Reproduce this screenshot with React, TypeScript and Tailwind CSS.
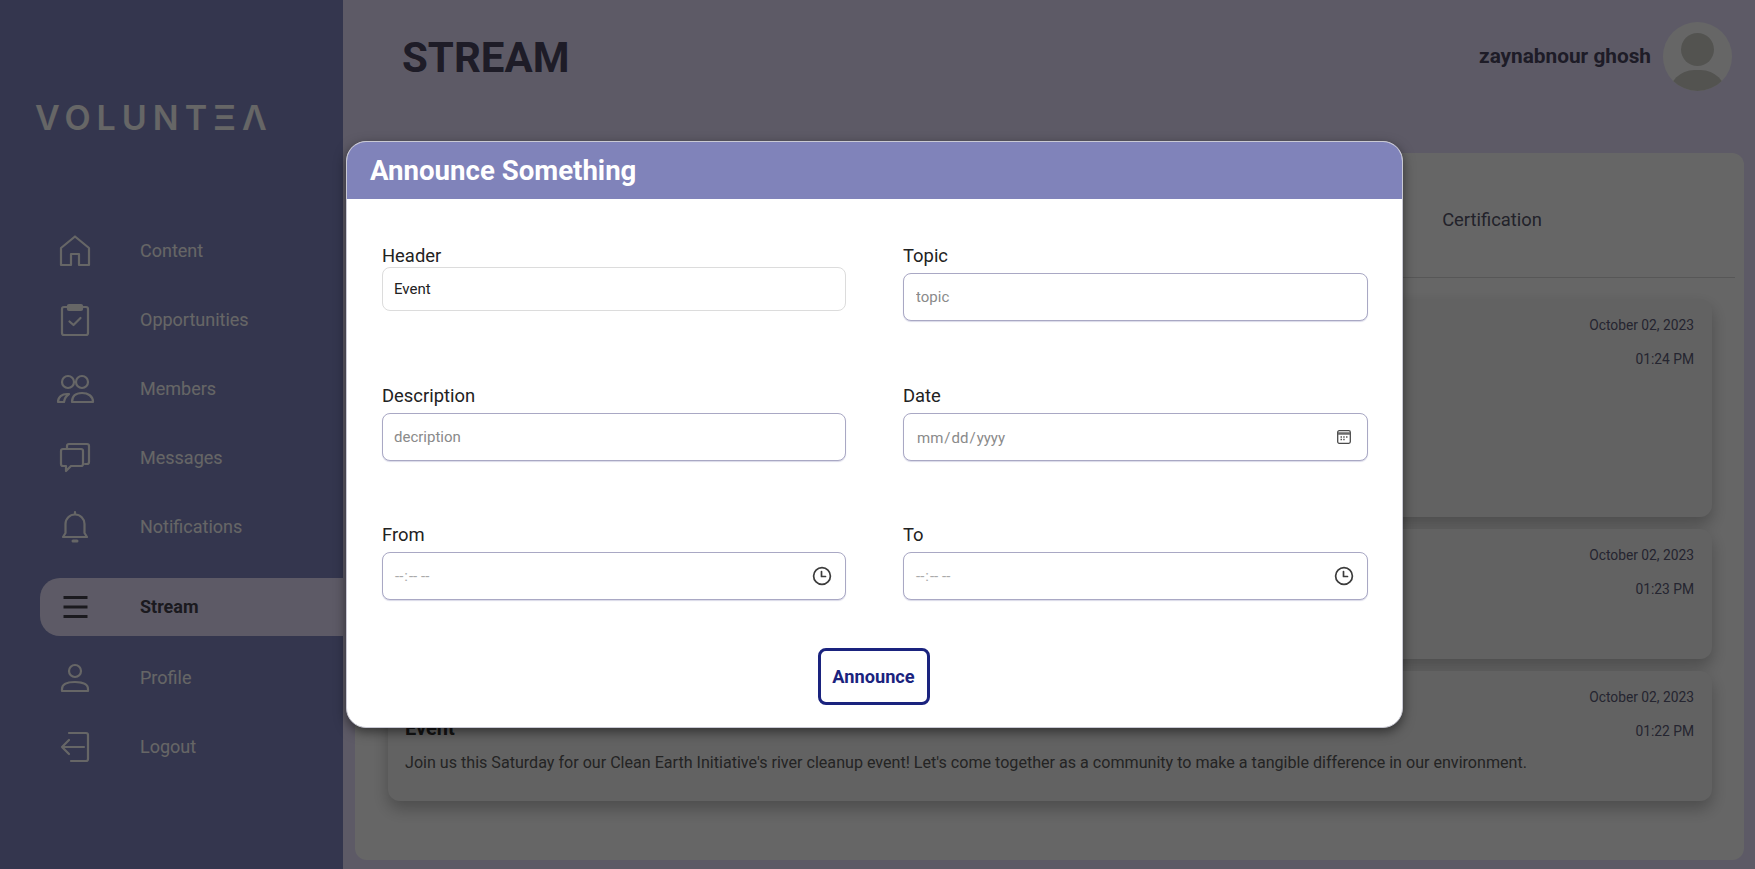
const nav = [
  { name: "Content", icon: "home" },
  { name: "Opportunities", icon: "clipboard" },
  { name: "Members", icon: "members" },
  { name: "Messages", icon: "messages" },
  { name: "Notifications", icon: "bell" },
  { name: "Stream", icon: "menu" },
  { name: "Profile", icon: "user" },
  { name: "Logout", icon: "logout" },
];

function NavIcon({ icon }: { icon: string }) {
  return (
    <svg viewBox="0 0 40 36" className="h-9 w-10" fill="none" stroke="currentColor" strokeWidth="2.200" strokeLinejoin="round" strokeLinecap="round">
      {icon === "home" && <path d="M6 32V15L20 3.500 34 15V32H24V21H16V32Z" />}
      {icon === "clipboard" && (
        <>
          <rect x="7" y="5" width="26" height="28" rx="2" />
          <rect x="13" y="3" width="14" height="5" rx="1" fill="currentColor" />
          <path d="M14.500 19.500l4 3.500 7-7" />
        </>
      )}
      {icon === "members" && (
        <>
          <circle cx="13" cy="11" r="6" />
          <circle cx="27" cy="11" r="6" />
          <path d="M17 31c0-6 4-9 10-9s11 3 11 9z" />
          <path d="M3 31c0-5 4-8 9-8h2c-3 2-4.500 5-5 8z" />
        </>
      )}
      {icon === "messages" && (
        <>
          <path d="M12 8V6a2 2 0 0 1 2-2h18a2 2 0 0 1 2 2v16a2 2 0 0 1-2 2h-2" />
          <path d="M8 9h18a2 2 0 0 1 2 2v13a2 2 0 0 1-2 2H16l-5 5v-5H8a2 2 0 0 1-2-2V11a2 2 0 0 1 2-2z" />
        </>
      )}
      {icon === "bell" && (
        <>
          <path d="M8 28l2.500-4V15a9.500 9.500 0 0 1 19 0v9l2.500 4z" />
          <path d="M20 3v2" />
          <path d="M18 32h4" strokeWidth="3" />
        </>
      )}
      {icon === "menu" && <path d="M8.500 8.500h24M8.500 18h24M8.500 27.500h24" strokeWidth="3" strokeLinecap="butt" />}
      {icon === "user" && (
        <>
          <circle cx="20" cy="11" r="6" />
          <path d="M7 31v-2c0-5 6-7 13-7s13 2 13 7v2z" />
        </>
      )}
      {icon === "logout" && (
        <>
          <path d="M14 4h17a2 2 0 0 1 2 2v24a2 2 0 0 1-2 2H16" />
          <path d="M29 18H7M14 11l-7 7 7 7" />
        </>
      )}
    </svg>
  );
}

function ClockIcon() {
  return (
    <svg viewBox="0 0 20 20" className="pointer-events-none absolute right-[14px] top-[14px] h-5 w-5" fill="none" stroke="#3c3c3c" strokeWidth="1.700" strokeLinecap="round" strokeLinejoin="round">
      <circle cx="10" cy="10" r="8.400" />
      <path d="M9.500 5.500v5h4" />
    </svg>
  );
}

function CalendarIcon() {
  return (
    <svg viewBox="0 0 14 14" className="pointer-events-none absolute right-[17px] top-[17px] h-[14px] w-[14px]" fill="none">
      <rect x="0.700" y="0.700" width="12.600" height="12.600" rx="1.500" stroke="#4a4a4a" strokeWidth="1.300" />
      <path d="M1 3.500h12" stroke="#6a6a6a" strokeWidth="2.500" />
      <path d="M3.500 7h1.500M6.200 7h1.500M9 7h1.500M3.500 9.500h1.500M6.200 9.500h1.500" stroke="#555" strokeWidth="1.300" />
    </svg>
  );
}

function Card({ time, height, children }: { time: string; height: string; children?: React.ReactNode }) {
  return (
    <div className={`relative rounded-xl bg-[#f5f5f5] px-[17px] shadow-[0_8px_16px_rgba(0,0,0,0.25)] ${height}`}>
      <div className="absolute right-[18px] top-[16px] text-right text-[13.8px] text-[#5c5c78]">
        <p className="leading-[20px]">October 02, 2023</p>
        <p className="mt-[14px] leading-[20px]">{time}</p>
      </div>
      {children}
    </div>
  );
}

const inputCls =
  "block h-[48px] w-full rounded-lg border border-[#a9a8c4] bg-white px-[11px] text-[15px] text-[#8a8a8a] shadow-[0_1px_1px_rgba(130,130,180,0.3)] outline-none placeholder:text-[#8a8a8a]";
const pickerCls = " [&::-webkit-calendar-picker-indicator]:opacity-0";

function Field({ label, gap, children }: { label: string; gap: string; children: React.ReactNode }) {
  return (
    <div>
      <label className={`block text-[18.4px] leading-[21px] text-[#222] ${gap}`}>{label}</label>
      {children}
    </div>
  );
}

export default function App() {
  return (
    <div className="relative flex h-[869px] w-full overflow-hidden bg-[#e8e2fe] font-['Roboto',sans-serif]">
      {/* Sidebar */}
      <aside className="w-[343px] shrink-0 bg-[#8287c2] pt-[97px] pl-[40px] text-white">
        <div className="-ml-[5px] font-['Inter',sans-serif] text-[34px] font-semibold leading-[41px] tracking-[6px]">VOLUNTΞΛ</div>
        <nav className="mt-[78px]">
          {nav.map((item) =>
            item.name === "Stream" ? (
              <div key={item.name} className="mb-[7px] mt-[17px] flex h-[58px] items-center gap-[45px] rounded-l-[20px] bg-[#e8e2fe] pl-[15px] text-lg font-bold text-[#45414f]">
                <NavIcon icon={item.icon} />
                <span>{item.name}</span>
              </div>
            ) : (
              <div key={item.name} className="flex h-[69px] items-center gap-[45px] pl-[15px] text-lg">
                <NavIcon icon={item.icon} />
                <span>{item.name}</span>
              </div>
            )
          )}
        </nav>
      </aside>

      {/* Main */}
      <main className="flex-1 pl-[12px] pr-[11px]">
        <header className="flex h-[153px] items-start justify-between pl-[47px] pr-[12px] pt-[22px]">
          <h1 className="text-[42px] font-bold leading-[72px] text-[#4b4662]">STREAM</h1>
          <div className="flex items-center gap-[12px]">
            <span className="text-[20.8px] font-bold text-[#4b4662]">zaynabnour ghosh</span>
            <div className="relative h-[69px] w-[69px] overflow-hidden rounded-full bg-white">
              <div className="absolute left-[18px] top-[11px] h-[33px] w-[33px] rounded-full bg-[#cfd0c9]" />
              <div className="absolute left-[6px] top-[48px] h-[50px] w-[57px] rounded-full bg-[#cfd0c9]" />
            </div>
          </div>
        </header>
        <section className="h-[707px] rounded-xl bg-white pl-[33px] pr-[9px]">
          <div className="flex h-[125px] items-center justify-end border-b border-[#d9d9d9] pr-[193px] pt-[9px] text-[18.4px] text-[#55556a]">
            Certification
          </div>
          <div className="mr-[23px] mt-[21px] flex flex-col gap-[12px]">
            <Card time="01:24 PM" height="h-[218px]" />
            <Card time="01:23 PM" height="h-[130px]" />
            <Card time="01:22 PM" height="h-[130px]">
              <h3 className="pt-[45px] text-xl font-bold leading-[24px] text-[#333]">Event</h3>
              <p className="mt-[11px] text-[16.1px] leading-[24px] text-[#5a5a5a]">
                Join us this Saturday for our Clean Earth Initiative's river cleanup event! Let's come together as a community to make a tangible difference in our environment.
              </p>
            </Card>
          </div>
        </section>
      </main>

      {/* Modal */}
      <div className="absolute inset-0 flex items-center justify-center bg-black/60 pr-[6px]">
        <div className="h-[587px] w-[1057px] overflow-hidden rounded-[20px] border border-[#c9c9d4] bg-white shadow-[0_4px_12px_rgba(0,0,0,0.5)]">
          <div className="flex h-[57px] items-center bg-[#8083ba] pl-[23px] text-[27.6px] font-bold text-white">
            Announce Something
          </div>
          <form className="grid grid-cols-[464px_465px] grid-rows-[140px_139px_95px] gap-x-[57px] pl-[35px] pt-[46px]">
            <Field label="Header" gap="mb-[1px]">
              <input defaultValue="Event" className="block h-[44px] w-full rounded-lg border border-[#dcdcdc] bg-white px-[11px] text-[15px] text-[#222] outline-none" />
            </Field>
            <Field label="Topic" gap="mb-[7px]">
              <input placeholder="topic" className={inputCls + " pl-[12px]"} />
            </Field>
            <Field label="Description" gap="mb-[7px]">
              <input placeholder="decription" className={inputCls} />
            </Field>
            <Field label="Date" gap="mb-[7px]">
              <div className="relative">
                <input type="date" className={inputCls + pickerCls + " pl-[12px] pt-[2px] text-[15.4px]"} />
                <CalendarIcon />
              </div>
            </Field>
            <Field label="From" gap="mb-[7px]">
              <div className="relative">
                <input type="time" className={inputCls + pickerCls + " text-[15.5px] text-[#aaaaaa]"} />
                <ClockIcon />
              </div>
            </Field>
            <Field label="To" gap="mb-[7px]">
              <div className="relative">
                <input type="time" className={inputCls + pickerCls + " text-[15.5px] text-[#aaaaaa]"} />
                <ClockIcon />
              </div>
            </Field>
          </form>
          <div className="mt-[29px] flex justify-center pr-[2px]">
            <button type="button" className="h-[57px] w-[112px] rounded-lg border-[3px] border-[#1a237e] bg-white text-[18.2px] font-bold text-[#1a237e]">
              Announce
            </button>
          </div>
        </div>
      </div>
    </div>
  );
}
